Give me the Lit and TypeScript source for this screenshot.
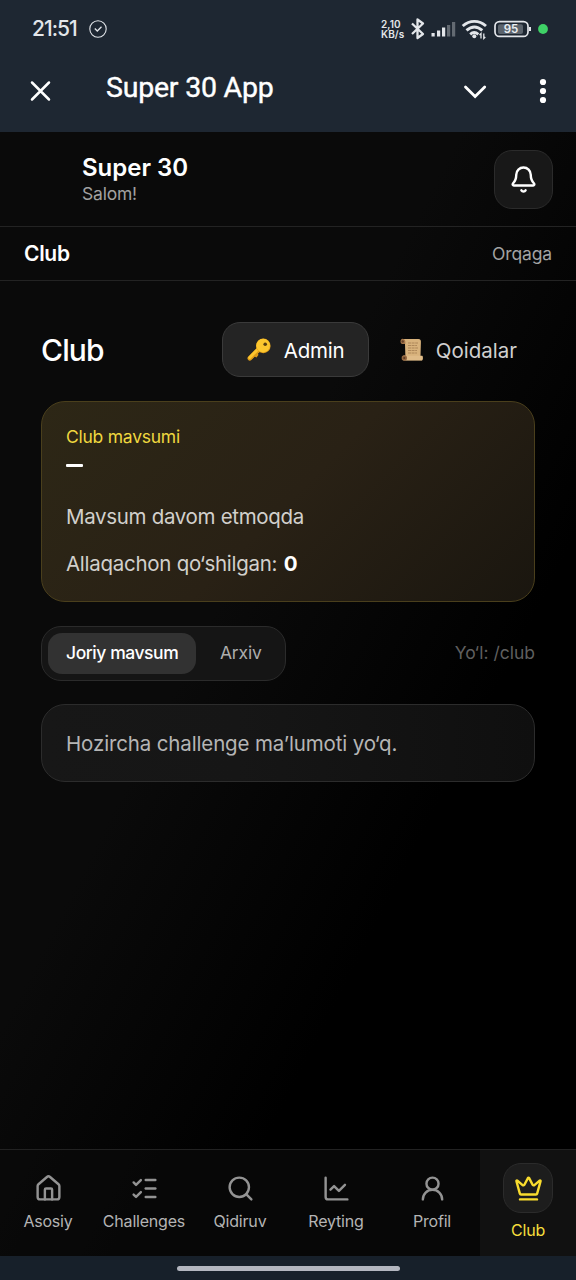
import { LitElement, html, css, svg } from "lit";
import { customElement, property } from "lit/decorators.js";

const glyphs: Record<string, unknown> = {
  bell: svg`<path d="M10.268 21a2 2 0 0 0 3.464 0"/><path d="M3.262 15.326A1 1 0 0 0 4 17h16a1 1 0 0 0 .74-1.673C19.41 13.956 18 12.499 18 8A6 6 0 0 0 6 8c0 4.499-1.411 5.956-2.738 7.326"/>`,
  home: svg`<path d="M15 21v-8a1 1 0 0 0-1-1h-4a1 1 0 0 0-1 1v8"/><path d="M3 10a2 2 0 0 1 .709-1.528l7-6a2 2 0 0 1 2.582 0l7 6A2 2 0 0 1 21 10v9a2 2 0 0 1-2 2H5a2 2 0 0 1-2-2z"/>`,
  checks: svg`<path d="M13 5h8"/><path d="M13 12h8"/><path d="M13 19h8"/><path d="m3 17 2 2 4-4"/><path d="m3 7 2 2 4-4"/>`,
  search: svg`<path d="m21 21-4.34-4.34"/><circle cx="11" cy="11" r="8"/>`,
  chart: svg`<path d="M3 3v16a2 2 0 0 0 2 2h16"/><path d="m19 9-5 5-4-4-3 3"/>`,
  user: svg`<circle cx="12" cy="8" r="5"/><path d="M20 21a8 8 0 0 0-16 0"/>`,
  crown: svg`<path d="M11.562 3.266a.5.5 0 0 1 .876 0L15.39 8.87a1 1 0 0 0 1.516.294L21.183 5.5a.5.5 0 0 1 .798.519l-2.834 10.246a1 1 0 0 1-.956.734H5.81a1 1 0 0 1-.957-.734L2.02 6.02a.5.5 0 0 1 .798-.519l4.276 3.664a1 1 0 0 0 1.516-.294z"/><path d="M5 21h14"/>`,
};

@customElement("line-icon")
export class LineIcon extends LitElement {
  @property() name = "";
  static styles = css`
    :host { display: block; width: 29px; height: 29px; }
    svg {
      display: block; width: 100%; height: 100%; fill: none; stroke: currentColor;
      stroke-width: 2; stroke-linecap: round; stroke-linejoin: round;
    }
  `;
  render() {
    return html`<svg viewBox="0 0 24 24">${glyphs[this.name]}</svg>`;
  }
}

@customElement("system-bar")
export class SystemBar extends LitElement {
  static styles = css`
    :host { display: flex; align-items: center; height: 58px; padding: 0 28px 0 32px; box-sizing: border-box; color: #e3e6ea; }
    svg { display: block; flex: none; }
    .clock { font-size: 21px; font-weight: 550; letter-spacing: -1.000px; width: 57px; line-height: 58px; }
    .gap { flex: 1; }
    .rate { display: flex; flex-direction: column; font-size: 10px; font-weight: 600; width: 29px; letter-spacing: 0.100px; white-space: nowrap; }
    .rate span { line-height: 10px; }
    .num { font: 600 11.500px Inter, sans-serif; fill: #eceff2; }
  `;
  render() {
    return html`
      <span class="clock">21:51</span>
      <svg width="18" height="18" viewBox="0 0 18 18" fill="none" stroke="currentColor" stroke-width="1.1"><circle cx="9" cy="9" r="8.2"/><path d="m5.800 8.500 2.500 2.500 4.200-4.200" stroke-width="1.300"/></svg>
      <span class="gap"></span>
      <span class="rate"><span>2,10</span><span>KB/s</span></span>
      <svg width="138" height="24" viewBox="410 17 138 24" fill="none" stroke="currentColor">
        <path d="m412 23.500 11 10.500-5.500 4V19.500l5.500 4-11 10.500" stroke-width="2.300" stroke-linejoin="round"/>
        <g fill="currentColor" stroke="none">
          <rect x="431.500" y="33" width="3.200" height="3.500"/><rect x="437" y="30.500" width="3.200" height="6"/><rect x="442" y="27.500" width="3.200" height="9"/>
          <g opacity=".35"><rect x="447" y="25" width="3.200" height="11.500"/><rect x="452" y="22" width="3.200" height="14.500"/></g>
        </g>
        <g stroke-width="2.900"><path d="M462.700 26c7-6.200 16.300-6.200 23.300 0"/><path d="M466.500 30.400c5-4.300 10.800-4.300 15.800 0"/><path d="M470.200 34.300c2.500-2.200 5.500-2.200 8.100 0"/></g>
        <circle cx="474.300" cy="36.300" r="2" fill="currentColor" stroke="none"/>
        <path d="M481 38.500v-5l-1.500 1.500M483.800 33.500v5l1.500-1.500" stroke-width="1.300"/>
        <rect x="495" y="21.600" width="33" height="14.800" rx="4.500" stroke-width="1.700"/>
        <rect x="498" y="24.300" width="25" height="9.600" rx="2" fill="#5b636c" stroke="none"/>
        <path d="M530 27v4" stroke-width="2"/>
        <text class="num" x="511" y="33.300" text-anchor="middle" stroke="none">95</text>
        <circle cx="543" cy="29" r="4.900" fill="#3fd267" stroke="none"/>
      </svg>
    `;
  }
}

@customElement("app-root")
export class AppRoot extends LitElement {
  static styles = css`
    :host {
      display: flex; flex-direction: column; width: 576px; height: 1280px; box-sizing: border-box; overflow: hidden;
      font-family: Inter, "Noto Sans", sans-serif; color: #fff; background: #1e2732; white-space: nowrap;
    }
    * { box-sizing: border-box; }
    svg { display: block; flex: none; }
    .titlebar { display: flex; align-items: center; height: 74px; padding: 0 28px 8px 29px; }
    .titlebar .name {
      flex: 1; margin-left: 54px; padding-bottom: 6px; font: 400 28.500px/40px Roboto, sans-serif; letter-spacing: -0.220px;
      -webkit-text-stroke: 0.400px #fff;
    }
    .more { margin-left: 51px; }
    .webapp {
      display: flex; flex-direction: column; height: 1124px;
      background: linear-gradient(to bottom right, #0a0a0a 0%, #0a0a0a 40%, #000 68%);
    }
    .header { display: flex; align-items: center; justify-content: space-between; height: 95px; padding: 0 23px 0 82px; border-bottom: 1px solid #232323; }
    .brand { font-size: 24px; line-height: 30px; font-weight: 570; letter-spacing: 0; }
    .hello { font-size: 17.500px; line-height: 22px; color: #a1a1a1; letter-spacing: -0.200px; }
    .bell { display: grid; place-items: center; width: 59px; height: 59px; border: 1px solid #2b2b2b; border-radius: 18px; background: #181818; }
    .crumb { display: flex; align-items: center; justify-content: space-between; height: 54px; padding: 0 24px; border-bottom: 1px solid #232323; }
    .crumb b { font-size: 21px; font-weight: 600; letter-spacing: -0.300px; }
    .crumb span { font-size: 17.500px; color: #a3a3a3; letter-spacing: -0.150px; }
    .main { flex: 1; padding: 41px 41px 0; }
    .top { display: flex; align-items: center; height: 55px; }
    .top h1 { flex: 1; margin: 0; font-size: 30px; font-weight: 550; letter-spacing: -0.850px; }
    .pill { display: flex; align-items: center; gap: 12px; height: 55px; padding: 0 24px; border: 1px solid transparent; border-radius: 18px; font-size: 20.500px; color: #d0d0d0; }
    .pill span { padding-top: 1px; }
    .pill.on { width: 147px; background: #242424; border-color: #3a3a3a; color: #fff; letter-spacing: -0.250px; }
    .pill.ghost { margin-left: 5px; padding-right: 17px; }
    .season { height: 201px; margin-top: 24px; padding: 24px; border: 1px solid #4a3f1c; border-radius: 24px; background: linear-gradient(135deg, #2d2716, #292115 50%, #1a160f); }
    .label { font-size: 17.500px; line-height: 22px; color: #f0d83f; letter-spacing: -0.250px; }
    .dash { width: 17px; height: 3px; margin: 16px 0 0; border-radius: 1px; background: #fff; }
    .season p { margin: 0; font-size: 20.500px; line-height: 30px; color: #d2d0cc; letter-spacing: -0.320px; }
    .season .running { margin-top: 35px; }
    .season .joined { margin-top: 17px; letter-spacing: -0.270px; }
    .season b { margin-left: 1px; font-weight: 700; color: #fff; }
    .row { display: flex; align-items: center; justify-content: space-between; margin-top: 24px; }
    .tabs { display: flex; width: 245px; height: 55px; padding: 6px; border: 1px solid #2b2b2b; border-radius: 20px; background: #151515; font-size: 17.500px; }
    .tab { display: flex; align-items: center; padding: 0 18px 2px; height: 41px; border-radius: 14px; color: #adadad; letter-spacing: -0.200px; }
    .tab.on { width: 148px; background: #323232; color: #fff; font-weight: 450; letter-spacing: -0.440px; }
    .tab.off { padding-left: 24px; }
    .path { font-size: 17.500px; line-height: 22px; padding-bottom: 2px; color: #5f5f5f; }
    .empty { display: flex; align-items: center; height: 78px; margin-top: 23px; padding: 0 24px; border: 1px solid #2c2c2c; border-radius: 24px; background: linear-gradient(to right, #171717, #161616 40%, #0f0f0f); font-size: 20.500px; color: #b5b5b5; letter-spacing: -0.140px; }
    .nav { display: grid; grid-template-columns: repeat(6, 96px); height: 107px; border-top: 1px solid #222; background: rgba(10, 10, 10, 0.7); }
    .item { display: flex; flex-direction: column; align-items: center; padding-top: 24px; font-size: 16px; line-height: 20px; color: #b4b4b4; letter-spacing: -0.200px; }
    .item line-icon { margin-bottom: 8px; color: #939393; }
    .item.on { padding-top: 13px; background: #111; color: #f6de3c; }
    .badge { display: grid; place-items: center; width: 50px; height: 50px; margin-bottom: 7px; border: 1px solid #2b2b2b; border-radius: 18px; background: #1d1d1d; }
    .item .badge line-icon { margin: 0; color: #f9dc2e; }
    .gesture { display: flex; justify-content: center; align-items: center; height: 24px; background: #17202a; }
    .gesture i { width: 223px; height: 5px; border-radius: 3px; background: #b3b6bf; }
  `;

  items = [["home", "Asosiy"], ["checks", "Challenges"], ["search", "Qidiruv"], ["chart", "Reyting"], ["user", "Profil"]];

  render() {
    return html`
      <system-bar></system-bar>
      <div class="titlebar">
        <svg width="23" height="22" viewBox="0 0 23 22" stroke="#fff" stroke-width="2.500" stroke-linecap="round"><path d="m3 2.500 17 17M20 2.500l-17 17"/></svg>
        <span class="name">Super 30 App</span>
        <svg width="24" height="16" viewBox="0 0 24 16" fill="none" stroke="#fff" stroke-width="2.800" stroke-linecap="round"><path d="m2.500 4 9.600 9.500L21.700 4"/></svg>
        <svg class="more" width="10" height="26" viewBox="0 0 10 26" fill="#fff"><circle cx="5" cy="4" r="3.100"/><circle cx="5" cy="13" r="3.100"/><circle cx="5" cy="22" r="3.100"/></svg>
      </div>
      <div class="webapp">
        <div class="header">
          <div><div class="brand">Super 30</div><div class="hello">Salom!</div></div>
          <div class="bell"><line-icon name="bell"></line-icon></div>
        </div>
        <div class="crumb"><b>Club</b><span>Orqaga</span></div>
        <div class="main">
          <div class="top">
            <h1>Club</h1>
            <div class="pill on">
              <svg width="25" height="25" viewBox="0 0 25 25">
                <path d="M2.800 21.300 13.500 10.500" stroke="#dd9b18" stroke-width="4.600" stroke-linecap="round"/>
                <path d="m4.500 21.500 3-3 1.800 1.200 1.300-1.900-.6-1.500 3-2.400" fill="#dd9b18" stroke="#dd9b18" stroke-width="1.500" stroke-linejoin="round"/>
                <path d="M2.700 20.500 13.500 9.700" stroke="#fdc52d" stroke-width="3" stroke-linecap="round"/>
                <circle cx="16.300" cy="8.900" r="7.300" fill="#e3a11b"/><circle cx="16.100" cy="8.500" r="6.800" fill="#fdc72e"/>
                <circle cx="18.200" cy="7.200" r="1.800" fill="#5a4011"/>
              </svg>
              <span>Admin</span>
            </div>
            <div class="pill ghost">
              <svg width="25" height="25" viewBox="0 0 25 25">
                <path d="M3.500 2h15.800c2.300 0 2.800 1.500 2.600 3.500L21.500 19h1.700v4.200H6.500L6 7H3.500z" fill="#d8b27c"/>
                <path d="M3.500 1.700c-2.600.3-2.800 5 0 5.300H6.300V4.500C6 2.500 5 1.700 3.500 1.700z" fill="#a4764a"/><circle cx="3.700" cy="4.500" r="1.200" fill="#65412a"/>
                <path d="M5.200 18.500c-3 .3-3 4.900 0 5H23c1.200-1 1.200-3.800.3-4.800H8z" fill="#dfbb88"/><circle cx="5.300" cy="21" r="2.700" fill="#936640"/><circle cx="5.300" cy="21" r="1.100" fill="#593822"/>
                <path d="M9 6h10M9 8.500h9M9 11h10M9 13.500h9M9 16h9" stroke="#a98256" stroke-width=".9" stroke-dasharray="3 .6"/>
              </svg>
              <span>Qoidalar</span>
            </div>
          </div>
          <section class="season">
            <div class="label">Club mavsumi</div>
            <div class="dash"></div>
            <p class="running">Mavsum davom etmoqda</p>
            <p class="joined">Allaqachon qo‘shilgan: <b>0</b></p>
          </section>
          <div class="row">
            <div class="tabs"><div class="tab on">Joriy mavsum</div><div class="tab off">Arxiv</div></div>
            <span class="path">Yo‘l: /club</span>
          </div>
          <div class="empty">Hozircha challenge ma’lumoti yo‘q.</div>
        </div>
        <nav class="nav">
          ${this.items.map(([icon, label]) => html`<div class="item"><line-icon name=${icon}></line-icon><span>${label}</span></div>`)}
          <div class="item on"><div class="badge"><line-icon name="crown"></line-icon></div><span>Club</span></div>
        </nav>
      </div>
      <div class="gesture"><i></i></div>
    `;
  }
}
